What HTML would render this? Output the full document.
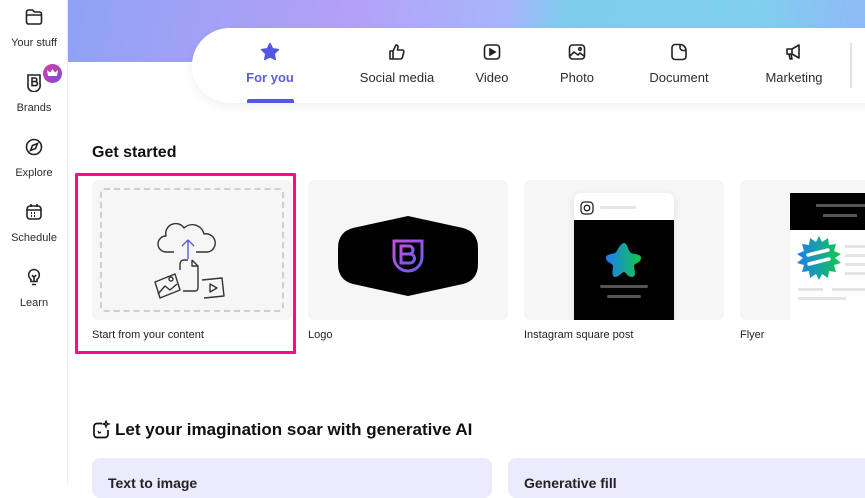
<!DOCTYPE html>
<html><head><style>
*{margin:0;padding:0;box-sizing:border-box}
body{width:865px;height:483px;overflow:hidden;background:#fff;font-family:"Liberation Sans",sans-serif;color:#222;position:relative}
.side{position:absolute;left:0;top:0;width:68px;height:483px;background:#fff;border-right:1px solid #ececec;z-index:3}
.si{position:absolute;left:0;width:68px;text-align:center;font-size:11px;color:#2c2c2c;white-space:nowrap}
.si svg{display:block;margin:0 auto 10px}
.banner{position:absolute;left:68px;top:0;width:797px;height:62px;background:linear-gradient(100deg,#8fa2f5 0%,#b4a0f7 35%,#a7b6fb 55%,#7dcdee 62%,#7fd0ef 85%,#91b8f6 100%)}
.pill{position:absolute;left:192px;top:28px;width:700px;height:75px;background:#fff;border-radius:40px 0 0 40px;box-shadow:0 4px 10px rgba(0,0,0,.06)}
.tab{position:absolute;top:14px;text-align:center;font-size:13px;color:#2c2c2c;white-space:nowrap}
.tab svg{display:block;margin:0 auto 8px}
h2{position:absolute;font-size:16px;font-weight:bold;color:#111;white-space:nowrap}
.card{position:absolute;top:180px;width:200px;height:140px;background:#f6f6f6;border-radius:6px;overflow:hidden}
.lbl{position:absolute;top:329px;font-size:11px;color:#222}
.gen{position:absolute;top:458px;height:40px;background:#ecebfd;border-radius:8px}
</style></head><body>
<div class="banner"></div>
<div class="pill">
 <div class="tab" style="left:50px;width:56px;color:#5c5ce0;font-weight:bold">
  <svg width="20" height="20" viewBox="0 0 20 20"><path d="M10 1.5l2.6 5.3 5.8.8-4.2 4.1 1 5.8L10 14.8l-5.2 2.7 1-5.8L1.6 7.6l5.8-.8z" fill="#5458e0" stroke="#5458e0" stroke-linejoin="round" stroke-width="1.5"/></svg>For you</div>
 <div style="position:absolute;left:55px;top:71px;width:47px;height:4px;background:#5458e0;border-radius:2px 2px 0 0"></div>
 <div class="tab" style="left:150px;width:110px"><svg width="20" height="20" viewBox="0 0 20 20" fill="none" stroke="#222" stroke-width="1.6" stroke-linejoin="round"><path d="M3 9h3v8H3zM6 9l3-6c1.5 0 2 1 2 2l-.5 3h5c1 0 1.5 1 1.3 2l-1.3 5c-.3 1-1 2-2 2H6"/></svg>Social media</div>
 <div class="tab" style="left:270px;width:60px"><svg width="20" height="20" viewBox="0 0 20 20" fill="none" stroke="#222" stroke-width="1.6"><rect x="2.5" y="3" width="15" height="14" rx="3"/><path d="M8 7v6l5-3z" fill="#222"/></svg>Video</div>
 <div class="tab" style="left:360px;width:50px"><svg width="20" height="20" viewBox="0 0 20 20" fill="none" stroke="#222" stroke-width="1.6"><rect x="2.5" y="3" width="15" height="14" rx="3"/><circle cx="13" cy="7" r="1.3"/><path d="M3 14l4-4 4 3 2-2 4 3"/></svg>Photo</div>
 <div class="tab" style="left:452px;width:70px"><svg width="20" height="20" viewBox="0 0 20 20" fill="none" stroke="#222" stroke-width="1.6"><path d="M6 2.5h5a6 6 0 016 6v6a3 3 0 01-3 3H6a3 3 0 01-3-3v-9a3 3 0 013-3zM11 2.5v3a3 3 0 003 3h3"/></svg>Document</div>
 <div class="tab" style="left:570px;width:64px"><svg width="20" height="20" viewBox="0 0 20 20" fill="none" stroke="#222" stroke-width="1.6" stroke-linejoin="round"><path d="M3 7h5l7-4v13l-7-4H3zM8 7v5M5 12l1 5h2l-1-5"/></svg>Marketing</div>
 <div style="position:absolute;left:658px;top:15px;width:2px;height:45px;background:#e2e2e2"></div>
</div>

<div class="side">
 <div class="si" style="top:7px"><svg width="20" height="20" viewBox="0 0 20 20" fill="none" stroke="#222" stroke-width="1.6"><path d="M2.5 5a2 2 0 012-2h4l2 2h5a2 2 0 012 2v8a2 2 0 01-2 2h-11a2 2 0 01-2-2zM2.5 8h15"/></svg>Your stuff</div>
 <div class="si" style="top:72px"><svg width="20" height="20" viewBox="0 0 20 20" fill="none" stroke="#222" stroke-width="1.6"><path d="M4 3h12v9a6 6 0 01-12 3z"/><path d="M8 6h3a1.8 1.8 0 010 3.6H8zM8 9.6h3.5a2 2 0 010 4H8z"/></svg>Brands</div>
 <div style="position:absolute;left:43px;top:64px;width:19px;height:19px;border-radius:50%;background:linear-gradient(135deg,#d43fa0,#7d4bd8)"><svg width="19" height="19" viewBox="0 0 19 19"><path d="M5 12l-1-6 3 2.5 2.5-3.5 2.5 3.5 3-2.5-1 6z" fill="#fff"/></svg></div>
 <div class="si" style="top:137px"><svg width="20" height="20" viewBox="0 0 20 20" fill="none" stroke="#222" stroke-width="1.6"><circle cx="10" cy="10" r="7.5"/><path d="M6.5 13.5l2-5 5-2-2 5z"/></svg>Explore</div>
 <div class="si" style="top:202px"><svg width="20" height="20" viewBox="0 0 20 20" fill="none" stroke="#222" stroke-width="1.6"><rect x="3" y="4" width="14" height="13" rx="3"/><path d="M3 8h14M7 2v3M13 2v3"/><path d="M7 11h1M10 11h1M13 11h0M7 14h1M10 14h1" stroke-width="2"/></svg>Schedule</div>
 <div class="si" style="top:267px"><svg width="20" height="20" viewBox="0 0 20 20" fill="none" stroke="#222" stroke-width="1.6"><path d="M10 2.5a5.5 5.5 0 00-3 10v2h6v-2a5.5 5.5 0 00-3-10zM8 17.5h4M8 8l2 2.5 2-2.5M10 10.5v4"/></svg>Learn</div>
</div>

<h2 style="left:92px;top:144px">Get started</h2>

<div class="card" style="left:92px"><div style="position:absolute;left:8px;top:8px;width:184px;height:124px;border:2px dashed #cfcfcf;border-radius:4px"></div>
<svg style="position:absolute;left:60px;top:30px" width="80" height="90" viewBox="0 0 80 90" fill="none" stroke="#333" stroke-width="1.4" stroke-linejoin="round"><path d="M22 42h-8a8 8 0 010-16 10 10 0 0118-8 12 12 0 0120 6 9 9 0 014 18h-12"/><path d="M36 49V30M30 36l6-6 6 6" stroke="#5a5ae0"/><path d="M36 50h-4a4 4 0 00-4 4v6M40 50v0l6 6v22a3 3 0 01-3 3h-12"/><path d="M40 50v6h6"/><path d="M3 72l20-8 5 16-20 8z"/><circle cx="19" cy="69" r="2"/><path d="M6 84l7-8 5 4 7-6"/><path d="M50 70l20-2 2 18-20 2"/><path d="M58 74v8l7-4z"/></svg></div>
<div class="lbl" style="left:92px">Start from your content</div>
<div style="position:absolute;left:75px;top:173px;width:221px;height:181px;border:3px solid #ff0a88;border-radius:1px"></div>

<div class="card" style="left:308px"><svg style="position:absolute;left:30px;top:36px" width="140" height="80" viewBox="0 0 140 80"><path d="M15 12L70 0l55 12q15 4 15 20v16q0 16-15 20L70 80 15 68Q0 64 0 48V32Q0 16 15 12z" fill="#000"/><defs><linearGradient id="bg" x1="0" y1="0" x2="1" y2="1"><stop offset="0" stop-color="#c050e0"/><stop offset="1" stop-color="#6b5cf0"/></linearGradient></defs><path d="M56 25h28v16a14 14 0 01-28 0z" fill="none" stroke="url(#bg)" stroke-width="3"/><path d="M63 30h8a4 4 0 010 8h-8zM63 38h9a4.5 4.5 0 010 9h-9zM63 30v17" fill="none" stroke="url(#bg)" stroke-width="3"/></svg></div>
<div class="lbl" style="left:308px">Logo</div>

<div class="card" style="left:524px"><div style="position:absolute;left:50px;top:13px;width:100px;height:130px;background:#fff;border-radius:7px 7px 0 0;box-shadow:0 2px 8px rgba(0,0,0,.1)"><svg style="position:absolute;left:6px;top:8px" width="14" height="14" viewBox="0 0 14 14" fill="none" stroke="#222" stroke-width="1.3"><rect x="1" y="1" width="12" height="12" rx="3.5"/><circle cx="7" cy="7" r="2.8"/></svg><div style="position:absolute;left:26px;top:13px;width:36px;height:3px;background:#e4e4e4;border-radius:2px"></div><div style="position:absolute;left:0;top:27px;width:100px;height:103px;background:#000"><svg style="position:absolute;left:31px;top:22px" width="38" height="36" viewBox="0 0 38 36"><defs><linearGradient id="sg" x1="0" y1="0" x2="1" y2="0"><stop offset="0" stop-color="#1e7bf5"/><stop offset="1" stop-color="#12c94a"/></linearGradient></defs><path d="M19 1c3 0 4 6 6 9s11 1 11 6-7 5-7 8 3 11-2 11-6-5-8-5-5 5-9 5-2-8-2-11-7-3-7-8 8-3 10-6 5-9 8-9z" fill="url(#sg)"/></svg><div style="position:absolute;left:26px;top:65px;width:48px;height:3px;background:#555;border-radius:2px"></div><div style="position:absolute;left:33px;top:75px;width:34px;height:3px;background:#555;border-radius:2px"></div></div></div></div>
<div class="lbl" style="left:524px">Instagram square post</div>

<div class="card" style="left:740px;width:130px;border-radius:6px 0 0 6px"><div style="position:absolute;left:50px;top:13px;width:90px;height:130px;background:#fff"><div style="position:absolute;left:0;top:0;width:90px;height:37px;background:#000"><div style="position:absolute;left:26px;top:11px;width:50px;height:3px;background:#555"></div><div style="position:absolute;left:33px;top:21px;width:34px;height:3px;background:#555"></div></div><svg style="position:absolute;left:7px;top:43px" width="44" height="44" viewBox="0 0 44 44"><defs><linearGradient id="fg" x1="0" y1="0" x2="1" y2="0"><stop offset="0" stop-color="#1e7bf5"/><stop offset="1" stop-color="#12c94a"/></linearGradient></defs><polygon points="22,0 25,6 31,2 32,9 39,8 37,15 44,18 38,22 44,27 37,29 39,36 32,35 31,42 25,38 22,44 19,38 13,42 12,35 5,36 7,29 0,27 6,22 0,18 7,15 5,8 12,9 13,2 19,6" fill="url(#fg)"/><path d="M11 19l20-5M12 28l20-5" stroke="#fff" stroke-width="3.5" stroke-linecap="round"/></svg><div style="position:absolute;left:55px;top:52px;width:35px;height:3px;background:#e4e4e4"></div><div style="position:absolute;left:55px;top:61px;width:35px;height:3px;background:#e4e4e4"></div><div style="position:absolute;left:55px;top:70px;width:35px;height:3px;background:#e4e4e4"></div><div style="position:absolute;left:55px;top:79px;width:35px;height:3px;background:#e4e4e4"></div><div style="position:absolute;left:8px;top:95px;width:25px;height:3px;background:#e4e4e4"></div><div style="position:absolute;left:42px;top:95px;width:48px;height:3px;background:#e4e4e4"></div><div style="position:absolute;left:8px;top:104px;width:48px;height:3px;background:#e4e4e4"></div></div></div>
<div class="lbl" style="left:740px">Flyer</div>

<svg style="position:absolute;left:91px;top:420px" width="20" height="20" viewBox="0 0 20 20" fill="none" stroke="#111" stroke-width="1.7"><path d="M11 3.5H6a3 3 0 00-3 3v8a3 3 0 003 3h8a3 3 0 003-3V10"/><path d="M7 11l1 2 2-1M15 1l.8 2.2L18 4l-2.2.8L15 7l-.8-2.2L12 4l2.2-.8z" stroke-width="1.3"/></svg>
<h2 style="left:115px;top:420px;font-size:17px">Let your imagination soar with generative AI</h2>
<div class="gen" style="left:92px;width:400px"><div style="position:absolute;left:16px;top:17px;font-size:14px;font-weight:bold">Text to image</div></div>
<div class="gen" style="left:508px;width:400px"><div style="position:absolute;left:16px;top:17px;font-size:14px;font-weight:bold">Generative fill</div></div>
</body></html>
